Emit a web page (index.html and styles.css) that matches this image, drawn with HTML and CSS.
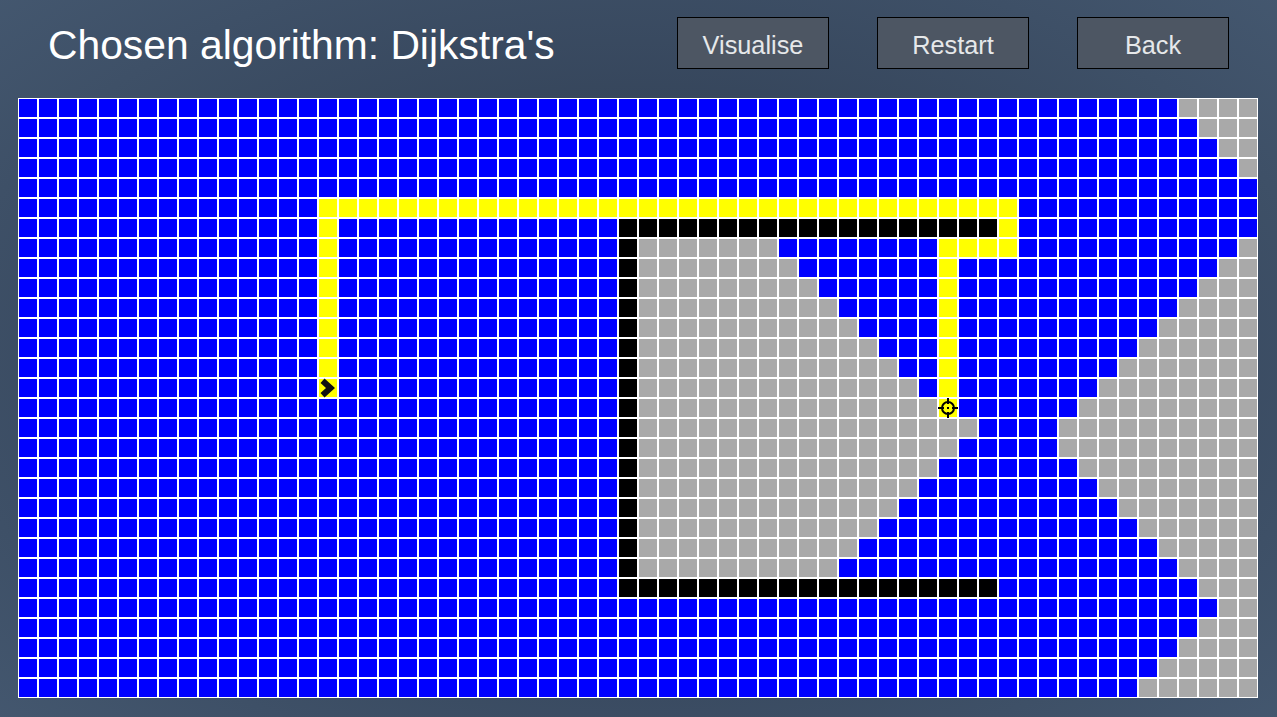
FILE: index.html
```html
<!DOCTYPE html>
<html lang="en">
<head>
    <meta charset="UTF-8">
    <title>Pathfinding Visualiser</title>
    <link rel="stylesheet" href="styles.css">
</head>
<body>
    <div class="header">
        <h1 class="title">Chosen algorithm: Dijkstra's</h1>
        <div class="button-container">
            <button class="btn">Visualise</button>
            <button class="btn">Restart</button>
            <button class="btn">Back</button>
        </div>
    </div>
    <div class="grid" id="grid"></div>
    <script src="script.js"></script>
</body>
</html>
```

FILE: styles.css
```css
html, body {
    height: 100%;
}
body {
    margin: 0;
    overflow: hidden;
    font-family: "Liberation Sans", Arial, sans-serif;
    background: radial-gradient(ellipse 75% 80% at 50% 50%, #34445a 0%, #36465c 45%, #465a72 100%);
}
.header {
    display: flex;
    align-items: center;
    justify-content: space-between;
    height: 86px;
    padding: 0 48px;
    box-sizing: border-box;
}
.title {
    margin: 0;
    padding-top: 4px;
    font-size: 40.8px;
    font-weight: normal;
    color: #fff;
}
.button-container {
    display: flex;
    gap: 48px;
}
.btn {
    width: 152px;
    height: 52px;
    padding: 4px 0 0;
    border: 1px solid #000;
    background: #4d5663;
    color: #e6e8ea;
    font-family: inherit;
    font-size: 25.3px;
}
.grid {
    display: grid;
    grid-template-columns: repeat(62, 18px);
    grid-auto-rows: 18px;
    gap: 2px;
    width: 1238px;
    margin: 12px 0 0 18px;
    padding: 1px;
    background: #fff;
}
.cell {
    position: relative;
}
.visited { background: #0000ff; }
.unvisited { background: #a9a9a9; }
.wall { background: #000; }
.path { background: #ffff00; }
.marker {
    display: block;
    width: 18px;
    height: 18px;
    overflow: visible;
}
```

FILE: script.js
```js
// each row is a list of [first column, state] runs, up to the next run
var V = "visited", U = "unvisited", W = "wall", P = "path";

var rows = [
    [[0, V], [58, U]],
    [[0, V], [59, U]],
    [[0, V], [60, U]],
    [[0, V], [61, U]],
    [[0, V]],
    [[0, V], [15, P], [50, V]],
    [[0, V], [15, P], [16, V], [30, W], [49, P], [50, V]],
    [[0, V], [15, P], [16, V], [30, W], [31, U], [38, V], [46, P], [50, V], [61, U]],
    [[0, V], [15, P], [16, V], [30, W], [31, U], [39, V], [46, P], [47, V], [60, U]],
    [[0, V], [15, P], [16, V], [30, W], [31, U], [40, V], [46, P], [47, V], [59, U]],
    [[0, V], [15, P], [16, V], [30, W], [31, U], [41, V], [46, P], [47, V], [58, U]],
    [[0, V], [15, P], [16, V], [30, W], [31, U], [42, V], [46, P], [47, V], [57, U]],
    [[0, V], [15, P], [16, V], [30, W], [31, U], [43, V], [46, P], [47, V], [56, U]],
    [[0, V], [15, P], [16, V], [30, W], [31, U], [44, V], [46, P], [47, V], [55, U]],
    [[0, V], [15, P], [16, V], [30, W], [31, U], [45, V], [46, P], [47, V], [54, U]],
    [[0, V], [30, W], [31, U], [46, P], [47, V], [53, U]],
    [[0, V], [30, W], [31, U], [48, V], [52, U]],
    [[0, V], [30, W], [31, U], [47, V], [52, U]],
    [[0, V], [30, W], [31, U], [46, V], [53, U]],
    [[0, V], [30, W], [31, U], [45, V], [54, U]],
    [[0, V], [30, W], [31, U], [44, V], [55, U]],
    [[0, V], [30, W], [31, U], [43, V], [56, U]],
    [[0, V], [30, W], [31, U], [42, V], [57, U]],
    [[0, V], [30, W], [31, U], [41, V], [58, U]],
    [[0, V], [30, W], [49, V], [59, U]],
    [[0, V], [60, U]],
    [[0, V], [59, U]],
    [[0, V], [58, U]],
    [[0, V], [57, U]],
    [[0, V], [56, U]]
];

var startIcon = '<svg class="marker" viewBox="0 0 18 18"><path d="M1.5 4L5.5 -0.5L16 9L5.5 18.5L1.5 14L7 9Z" fill="#111"/></svg>';
var targetIcon = '<svg class="marker" viewBox="0 0 18 18"><circle cx="9" cy="9" r="6" fill="none" stroke="#000" stroke-width="2"/>' +
    '<rect x="8" y="8" width="2" height="2" fill="#000"/>' +
    '<path d="M9 -1v6M9 13v6M-1 9h6M13 9h6" stroke="#000" stroke-width="2"/></svg>';

var grid = document.getElementById("grid");
var html = "";

rows.forEach(function (runs, r) {
    for (var c = 0; c < 62; c++) {
        var state = V;
        runs.forEach(function (run) {
            if (run[0] <= c) state = run[1];
        });
        var inner = "";
        if (r === 14 && c === 15) inner = startIcon;
        if (r === 15 && c === 46) inner = targetIcon;
        html += '<div class="cell ' + state + '">' + inner + "</div>";
    }
});

grid.innerHTML = html;
```
